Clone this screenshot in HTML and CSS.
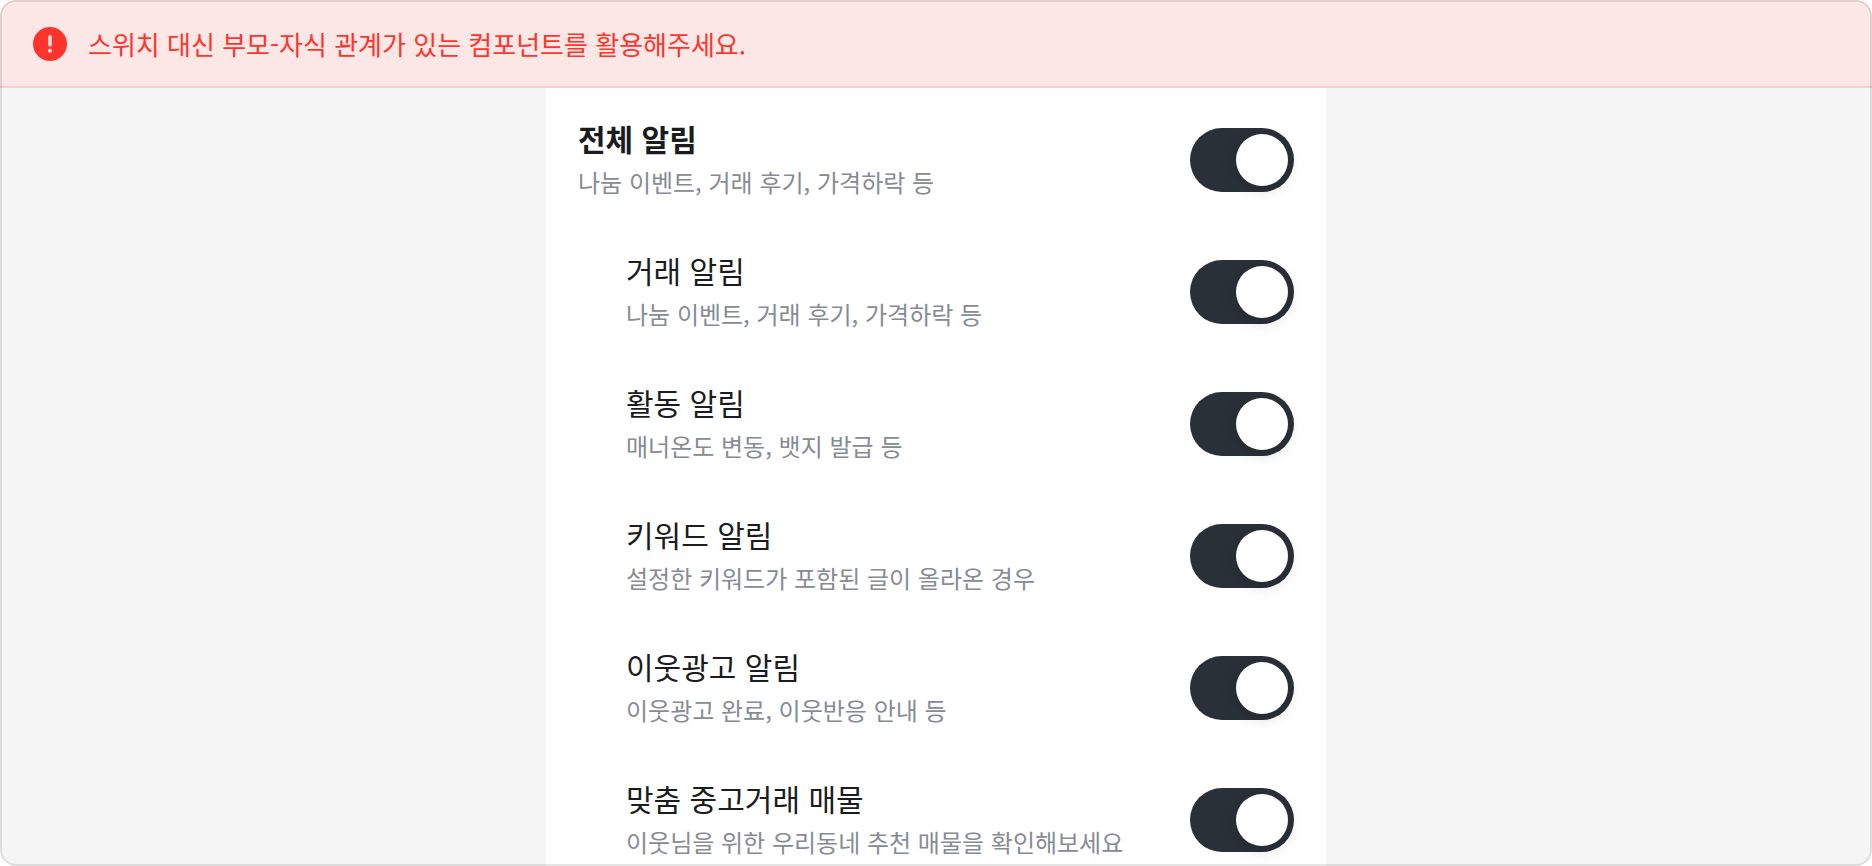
FILE: index.html
```html
<!DOCTYPE html>
<html lang="ko">
<head>
  <meta charset="UTF-8">
  <meta name="viewport" content="width=device-width, initial-scale=1">
  <title>알림 설정</title>
  <link rel="stylesheet" href="styles.css">
</head>
<body>

  <main class="frame">
    <div class="banner" role="alert">
      <svg class="banner-icon" viewBox="0 0 34 34" aria-hidden="true">
        <circle cx="17" cy="17" r="17" fill="#ff342c"/>
        <rect x="15.3" y="8" width="3.4" height="11.6" rx="1.7" fill="#fbe7e6"/>
        <circle cx="17" cy="23.8" r="2" fill="#fbe7e6"/>
      </svg>
      <p class="banner-text">스위치 대신 부모-자식 관계가 있는 컴포넌트를 활용해주세요.</p>
    </div>

    <div class="panel">
      <label class="row parent">
        <span class="text">
          <span class="title">전체 알림</span>
          <span class="desc">나눔 이벤트, 거래 후기, 가격하락 등</span>
        </span>
        <input class="switch" type="checkbox" role="switch" checked>
      </label>

      <label class="row child">
        <span class="text">
          <span class="title">거래 알림</span>
          <span class="desc">나눔 이벤트, 거래 후기, 가격하락 등</span>
        </span>
        <input class="switch" type="checkbox" role="switch" checked>
      </label>

      <label class="row child">
        <span class="text">
          <span class="title">활동 알림</span>
          <span class="desc">매너온도 변동, 뱃지 발급 등</span>
        </span>
        <input class="switch" type="checkbox" role="switch" checked>
      </label>

      <label class="row child">
        <span class="text">
          <span class="title">키워드 알림</span>
          <span class="desc">설정한 키워드가 포함된 글이 올라온 경우</span>
        </span>
        <input class="switch" type="checkbox" role="switch" checked>
      </label>

      <label class="row child">
        <span class="text">
          <span class="title">이웃광고 알림</span>
          <span class="desc">이웃광고 완료, 이웃반응 안내 등</span>
        </span>
        <input class="switch" type="checkbox" role="switch" checked>
      </label>

      <label class="row child">
        <span class="text">
          <span class="title">맞춤 중고거래 매물</span>
          <span class="desc">이웃님을 위한 우리동네 추천 매물을 확인해보세요</span>
        </span>
        <input class="switch" type="checkbox" role="switch" checked>
      </label>
    </div>
  </main>

</body>
</html>
```
FILE: styles.css
```css
* {
  box-sizing: border-box;
}
body {
  margin: 0;
  background: #fff;
  font-family: "Noto Sans CJK KR", "Noto Sans", sans-serif;
}

.frame {
  position: relative;
  display: flex;
  flex-direction: column;
  height: 100vh;
  overflow: hidden;
  background: #f5f5f5;
  border-radius: 16px;
}
/* outline sits on top of the banner and the panel */
.frame::after {
  content: "";
  position: absolute;
  inset: 0;
  border: 2px solid rgba(0, 0, 0, 0.1);
  border-radius: 16px;
  pointer-events: none;
}

.banner {
  display: flex;
  flex-shrink: 0;
  align-items: center;
  gap: 21px;
  padding: 25px 33px 23px;
  background: #fbe7e6;
  border-bottom: 2px solid #f9cccb;
}
.banner-icon {
  flex-shrink: 0;
  width: 34px;
  height: 34px;
}
.banner-text {
  margin: 0;
  color: #ff342c;
  font-size: 26px;
  line-height: 38px;
}

.panel {
  flex: 1 0 auto;
  width: 100%;
  max-width: 780px;
  margin: 0 auto;
  padding-top: 6px;
  background: #fff;
}
.row {
  display: flex;
  align-items: center;
  justify-content: space-between;
  gap: 24px;
  padding: 22px 32px;
  cursor: pointer;
}
.child {
  padding-left: 80px;
}
.title,
.desc {
  display: block;
  line-height: 44px;
}
.title {
  color: #1a1c20;
  font-size: 30px;
}
.parent .title {
  font-weight: 700;
}
.desc {
  color: #868b94;
  font-size: 24px;
}

.switch {
  appearance: none;
  flex-shrink: 0;
  width: 104px;
  height: 64px;
  margin: 0;
  padding: 6px;
  background: #2a3038;
  border-radius: 32px;
  cursor: pointer;
}
.switch::before {
  content: "";
  display: block;
  width: 52px;
  height: 52px;
  background: #fff;
  border-radius: 50%;
  box-shadow: 0 4px 16px rgba(0, 0, 0, 0.15);
}
.switch:checked::before {
  margin-left: auto;
}
.switch:not(:checked) {
  background: #d1d3d8;
}
```
